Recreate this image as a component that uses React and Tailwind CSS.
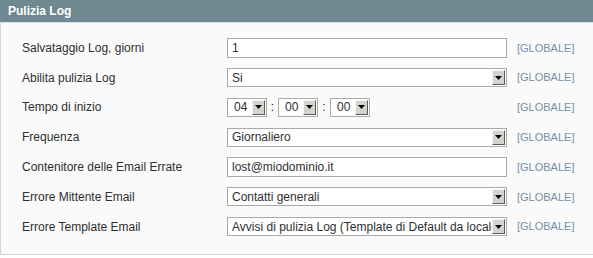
const ROWS = [
  { label: 'Salvataggio Log, giorni', type: 'text', value: '1' },
  { label: 'Abilita pulizia Log', type: 'select', value: 'Si' },
  { label: 'Tempo di inizio', type: 'time', value: ['04', '00', '00'] },
  { label: 'Frequenza', type: 'select', value: 'Giornaliero' },
  { label: 'Contenitore delle Email Errate', type: 'text', value: 'lost@miodominio.it' },
  { label: 'Errore Mittente Email', type: 'select', value: 'Contatti generali' },
  { label: 'Errore Template Email', type: 'select', value: 'Avvisi di pulizia Log (Template di Default da locale)' },
]

function ArrowButton() {
  return (
    <div className="flex h-[15px] w-[13px] shrink-0 items-center justify-center border border-t-[#f4f4f4] border-l-[#f4f4f4] border-r-[#5a5a5a] border-b-[#5a5a5a] bg-[#d6d3ce]">
      <svg width="7" height="4" viewBox="0 0 7 4"><path d="M0 0h7L3.5 4z" fill="#000" /></svg>
    </div>
  )
}

function FakeSelect({ value, className }) {
  return (
    <div className={`flex items-center border border-[#aaa] bg-white pl-[4px] pr-[1px] ${className}`}>
      <span className="flex-1 overflow-hidden whitespace-nowrap text-[12px] text-[#2f2f2f]">{value}</span>
      <ArrowButton />
    </div>
  )
}

function Field({ row }) {
  if (row.type === 'text') {
    return (
      <div className="flex h-[20px] w-[280px] items-center border border-[#aaa] bg-white px-[4px] text-[12px] text-[#2f2f2f]">
        {row.value}
      </div>
    )
  }
  if (row.type === 'select') {
    return <FakeSelect value={row.value} className="h-[19px] w-[280px]" />
  }
  return (
    <div className="flex w-[280px] items-center text-[12px] text-[#2f2f2f]">
      <FakeSelect value={row.value[0]} className="h-[19px] w-[40px] pl-[6px]" />
      <span className="w-[11px] text-center">:</span>
      <FakeSelect value={row.value[1]} className="h-[19px] w-[40px] pl-[6px]" />
      <span className="w-[12px] text-center">:</span>
      <FakeSelect value={row.value[2]} className="h-[19px] w-[40px] pl-[6px]" />
    </div>
  )
}

export default function App() {
  return (
    <div className="h-[258px] w-[593px] bg-white font-['Liberation_Sans',Arial,sans-serif]">
      <div className="flex h-[22px] items-center bg-[#6f8992] pl-[8px] text-[12px] font-bold text-white">
        Pulizia Log
      </div>
      <div className="h-[1px] bg-[#d5e3e8]" />
      <div className="border-b border-l border-[#d6d6d6] bg-[#fafafa] pb-[12px] pt-[10px]">
        {ROWS.map(row => (
          <div key={row.label} className="flex h-[29.8px] items-center">
            <div className="w-[226px] pl-[21px] text-[12px] text-[#2f2f2f]">{row.label}</div>
            <Field row={row} />
            <div className="pl-[10px] text-[11px] text-[#7590a8]">[GLOBALE]</div>
          </div>
        ))}
      </div>
    </div>
  )
}
